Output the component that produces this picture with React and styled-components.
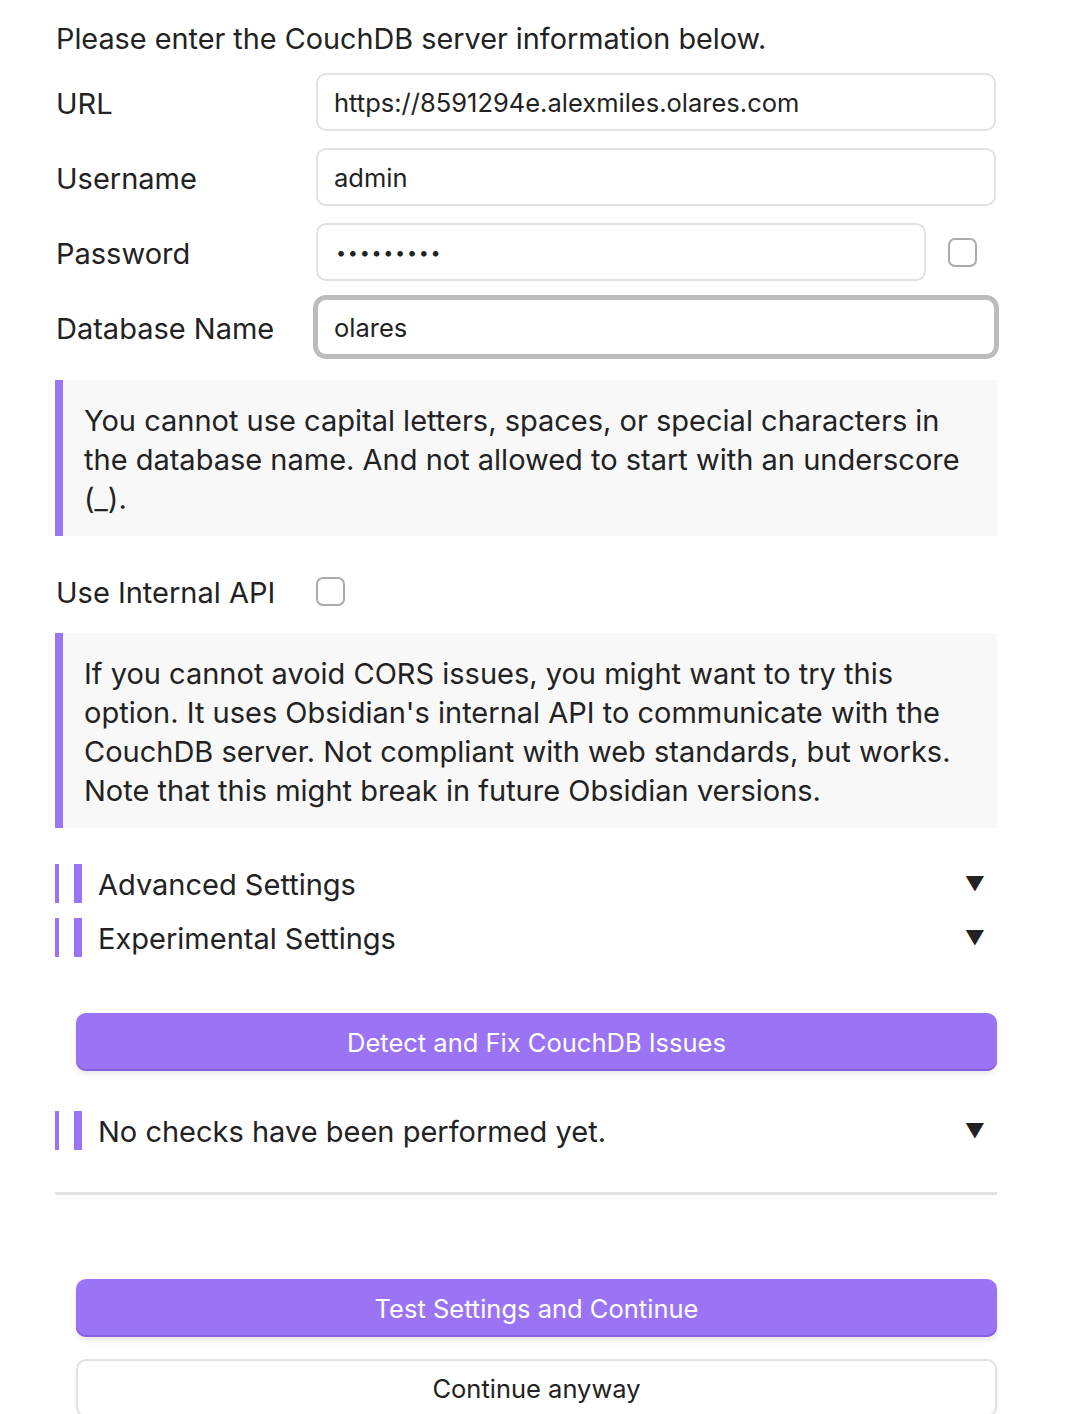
import React from "react";
import styled, { createGlobalStyle } from "styled-components";

const Global = createGlobalStyle`
  html, body { margin: 0; padding: 0; background: #ffffff; }
  body { font-family: Inter, "Noto Sans", sans-serif; color: #222222; -webkit-font-smoothing: antialiased; }
  * { box-sizing: border-box; }
`;

const ACCENT = "#9b74f5";

const Page = styled.div`
  width: 942px;
  margin-left: 55px;
  padding-top: 19px;
  font-size: 29px;
  line-height: 1.35;
`;

const Intro = styled.p`
  margin: 0 0 15px 1px;
  font-size: 28.8px;
  line-height: 39px;
`;

const Rows = styled.div`
  display: flex;
  flex-direction: column;
  gap: 17px;
`;

const Row = styled.div`
  display: flex;
  align-items: center;
  height: 58px;
  margin-top: ${(p) => p.$mt || 0}px;
`;

const Label = styled.div`
  width: 261px;
  flex-shrink: 0;
  padding-left: 1px;
  padding-top: 4px;
  font-size: 29px;
`;

const Input = styled.div`
  height: 58px;
  width: ${(p) => p.$w || 680}px;
  border: 2px solid ${(p) => (p.$focus ? "#bcbcbc" : "#e2e2e2")};
  box-shadow: ${(p) => (p.$focus ? "0 0 0 3px #bcbcbc" : "none")};
  border-radius: 10px;
  display: flex;
  align-items: center;
  padding: 3px 0 0 16px;
  font-size: 25.5px;
  color: #222;
  background: #fff;
`;

const Dots = styled.span`
  letter-spacing: 1.7px;
  font-size: 18px;
  padding-left: 2px;
`;

const Checkbox = styled.div`
  width: 29px;
  height: 29px;
  border: 2px solid #ababab;
  border-radius: 7px;
  margin-left: ${(p) => p.$ml || 0}px;
  flex-shrink: 0;
  background: #fff;
`;

const Callout = styled.div`
  margin-top: ${(p) => p.$mt}px;
  background: #f8f8f8;
  border-left: 8px solid ${ACCENT};
  padding: 21px 30px 18px 21px;
  font-size: 29px;
  line-height: 39px;
  color: #222;
`;

const Collapsible = styled.div`
  display: flex;
  align-items: center;
  height: 39px;
  margin-top: ${(p) => p.$mt}px;
`;

const BarThin = styled.span`
  width: 4px;
  height: 39px;
  background: ${ACCENT};
  flex-shrink: 0;
`;

const BarThick = styled.span`
  width: 8px;
  height: 39px;
  background: ${ACCENT};
  margin-left: 15px;
  flex-shrink: 0;
`;

const CollapsibleTitle = styled.span`
  flex: 1;
  margin-left: 16px;
  padding-top: 3px;
  font-size: 29px;
  color: #222;
`;

const Caret = styled.span`
  font-size: 20px;
  margin-right: 12px;
  color: #222;
  line-height: 1;
`;

const Button = styled.div`
  margin-top: ${(p) => p.$mt}px;
  margin-left: 21px;
  height: 58px;
  border-radius: 10px;
  display: flex;
  align-items: center;
  justify-content: center;
  padding-top: 2px;
  font-size: 25.5px;
  background: ${(p) => (p.$primary ? ACCENT : "#ffffff")};
  color: ${(p) => (p.$primary ? "#ffffff" : "#222222")};
  border: ${(p) => (p.$primary ? "none" : "2px solid #e2e2e2")};
  box-shadow: ${(p) =>
    p.$primary
      ? "inset 0 -2px 0 #8560e0, 0 3px 6px rgba(0,0,0,0.10)"
      : "0 2px 4px rgba(0,0,0,0.05)"};
`;

const Divider = styled.hr`
  margin: 42px 0 0 0;
  border: none;
  height: 3px;
  background: #e2e2e2;
`;

function CollapsibleRow({ mt, children }) {
  return (
    <Collapsible $mt={mt}>
      <BarThin />
      <BarThick />
      <CollapsibleTitle>{children}</CollapsibleTitle>
      <Caret>▼</Caret>
    </Collapsible>
  );
}

export default function App() {
  return (
    <>
      <Global />
      <Page>
        <Intro>Please enter the CouchDB server information below.</Intro>
        <Rows>
          <Row>
            <Label>URL</Label>
            <Input>https://8591294e.alexmiles.olares.com</Input>
          </Row>
          <Row>
            <Label>Username</Label>
            <Input>admin</Input>
          </Row>
          <Row>
            <Label>Password</Label>
            <Input $w={610}>
              <Dots>{"•".repeat(9)}</Dots>
            </Input>
            <Checkbox $ml={22} />
          </Row>
          <Row>
            <Label>Database Name</Label>
            <Input $focus>olares</Input>
          </Row>
        </Rows>
        <Callout $mt={24}>
          You cannot use capital letters, spaces, or special characters in the
          database name. And not allowed to start with an underscore (_).
        </Callout>
        <Row $mt={26}>
          <Label>Use Internal API</Label>
          <Checkbox />
        </Row>
        <Callout $mt={13}>
          If you cannot avoid CORS issues, you might want to try this option. It
          uses Obsidian's internal API to communicate with the CouchDB server.
          Not compliant with web standards, but works. Note that this might
          break in future Obsidian versions.
        </Callout>
        <CollapsibleRow mt={36}>Advanced Settings</CollapsibleRow>
        <CollapsibleRow mt={15}>Experimental Settings</CollapsibleRow>
        <Button $primary $mt={56}>Detect and Fix CouchDB Issues</Button>
        <CollapsibleRow mt={40}>No checks have been performed yet.</CollapsibleRow>
        <Divider />
        <Button $primary $mt={84}>Test Settings and Continue</Button>
        <Button $mt={22}>Continue anyway</Button>
      </Page>
    </>
  );
}
